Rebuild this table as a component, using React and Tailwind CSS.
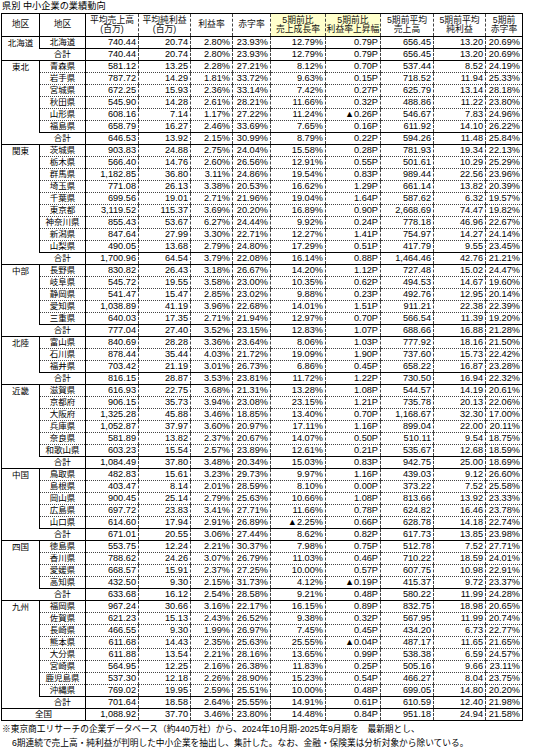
import React from "react";

const groups = [
  { name: "北海道", rows: [["北海道", "740.44", "20.74", "2.80%", "23.93%", "12.79%", "0.79P", "656.45", "13.20", "20.69%"]],
    total: ["740.44", "20.74", "2.80%", "23.93%", "12.79%", "0.79P", "656.45", "13.20", "20.69%"] },
  { name: "東北", rows: [
    ["青森県", "581.12", "13.25", "2.28%", "27.21%", "8.12%", "0.70P", "537.44", "8.52", "24.19%"],
    ["岩手県", "787.72", "14.29", "1.81%", "33.72%", "9.63%", "0.15P", "718.52", "11.94", "25.33%"],
    ["宮城県", "672.25", "15.93", "2.36%", "33.14%", "7.42%", "0.27P", "625.79", "13.14", "28.18%"],
    ["秋田県", "545.90", "14.28", "2.61%", "28.21%", "11.66%", "0.32P", "488.86", "11.22", "23.80%"],
    ["山形県", "608.16", "7.14", "1.17%", "27.22%", "11.24%", "▲0.26P", "546.67", "7.83", "24.96%"],
    ["福島県", "658.79", "16.27", "2.46%", "33.69%", "7.65%", "0.16P", "611.92", "14.10", "26.22%"]],
    total: ["646.53", "13.92", "2.15%", "30.99%", "8.79%", "0.22P", "594.26", "11.48", "25.84%"] },
  { name: "関東", rows: [
    ["茨城県", "903.83", "24.88", "2.75%", "24.04%", "15.58%", "0.28P", "781.93", "19.34", "22.13%"],
    ["栃木県", "566.40", "14.76", "2.60%", "26.56%", "12.91%", "0.55P", "501.61", "10.29", "25.29%"],
    ["群馬県", "1,182.85", "36.80", "3.11%", "24.86%", "19.54%", "0.83P", "989.44", "22.56", "23.96%"],
    ["埼玉県", "771.08", "26.13", "3.38%", "20.53%", "16.62%", "1.29P", "661.14", "13.82", "20.39%"],
    ["千葉県", "699.56", "19.01", "2.71%", "21.96%", "19.04%", "1.64P", "587.62", "6.32", "19.57%"],
    ["東京都", "3,119.52", "115.37", "3.69%", "20.20%", "16.89%", "0.90P", "2,668.69", "74.47", "19.82%"],
    ["神奈川県", "855.43", "53.67", "6.27%", "24.44%", "9.92%", "0.24P", "778.18", "46.96", "22.67%"],
    ["新潟県", "847.64", "27.99", "3.30%", "22.71%", "12.27%", "1.41P", "754.97", "14.27", "24.14%"],
    ["山梨県", "490.05", "13.68", "2.79%", "24.80%", "17.29%", "0.51P", "417.79", "9.55", "23.45%"]],
    total: ["1,700.96", "64.54", "3.79%", "22.08%", "16.14%", "0.88P", "1,464.46", "42.76", "21.21%"] },
  { name: "中部", rows: [
    ["長野県", "830.82", "26.43", "3.18%", "26.67%", "14.20%", "1.12P", "727.48", "15.02", "24.47%"],
    ["岐阜県", "545.72", "19.55", "3.58%", "23.00%", "10.35%", "0.62P", "494.53", "14.67", "19.60%"],
    ["静岡県", "541.47", "15.47", "2.85%", "23.02%", "9.88%", "0.23P", "492.76", "12.95", "20.14%"],
    ["愛知県", "1,038.89", "41.19", "3.96%", "22.68%", "14.01%", "1.51P", "911.21", "22.38", "22.39%"],
    ["三重県", "640.03", "17.35", "2.71%", "21.94%", "12.97%", "0.70P", "566.54", "11.39", "19.20%"]],
    total: ["777.04", "27.40", "3.52%", "23.15%", "12.83%", "1.07P", "688.66", "16.88", "21.28%"] },
  { name: "北陸", rows: [
    ["富山県", "840.69", "28.28", "3.36%", "23.64%", "8.06%", "1.03P", "777.92", "18.16", "21.50%"],
    ["石川県", "878.44", "35.44", "4.03%", "21.72%", "19.09%", "1.90P", "737.60", "15.73", "22.42%"],
    ["福井県", "703.42", "21.19", "3.01%", "26.73%", "6.86%", "0.45P", "658.22", "16.87", "23.28%"]],
    total: ["816.15", "28.87", "3.53%", "23.81%", "11.72%", "1.22P", "730.50", "16.94", "22.32%"] },
  { name: "近畿", rows: [
    ["滋賀県", "616.93", "22.75", "3.68%", "21.31%", "13.28%", "1.08P", "544.57", "14.19", "20.61%"],
    ["京都府", "906.15", "35.73", "3.94%", "23.08%", "23.15%", "1.21P", "735.78", "20.13", "22.06%"],
    ["大阪府", "1,325.28", "45.88", "3.46%", "18.85%", "13.40%", "0.70P", "1,168.67", "32.30", "17.00%"],
    ["兵庫県", "1,052.87", "37.97", "3.60%", "20.97%", "17.11%", "1.16P", "899.04", "22.00", "20.11%"],
    ["奈良県", "581.89", "13.82", "2.37%", "20.67%", "14.07%", "0.50P", "510.11", "9.54", "18.75%"],
    ["和歌山県", "603.23", "15.54", "2.57%", "23.89%", "12.61%", "0.21P", "535.67", "12.68", "18.59%"]],
    total: ["1,084.49", "37.80", "3.48%", "20.34%", "15.03%", "0.83P", "942.75", "25.00", "18.69%"] },
  { name: "中国", rows: [
    ["鳥取県", "482.83", "15.61", "3.23%", "29.73%", "9.97%", "1.16P", "439.03", "9.12", "26.60%"],
    ["島根県", "403.47", "8.14", "2.01%", "28.59%", "8.10%", "0.00P", "373.22", "7.52", "25.58%"],
    ["岡山県", "900.45", "25.14", "2.79%", "25.63%", "10.66%", "1.08P", "813.66", "13.92", "23.33%"],
    ["広島県", "697.72", "23.83", "3.41%", "27.71%", "11.66%", "0.78P", "624.82", "16.46", "23.78%"],
    ["山口県", "614.60", "17.94", "2.91%", "26.89%", "▲2.25%", "0.66P", "628.78", "14.18", "22.74%"]],
    total: ["671.01", "20.55", "3.06%", "27.44%", "8.62%", "0.82P", "617.73", "13.85", "23.98%"] },
  { name: "四国", rows: [
    ["徳島県", "553.75", "12.24", "2.21%", "30.37%", "7.98%", "0.75P", "512.78", "7.52", "27.71%"],
    ["香川県", "788.62", "24.26", "3.07%", "26.79%", "11.03%", "0.46P", "710.22", "18.59", "24.01%"],
    ["愛媛県", "668.57", "15.91", "2.37%", "27.25%", "10.00%", "0.57P", "607.75", "10.98", "22.91%"],
    ["高知県", "432.50", "9.30", "2.15%", "31.73%", "4.12%", "▲0.19P", "415.37", "9.72", "23.37%"]],
    total: ["633.68", "16.12", "2.54%", "28.58%", "9.21%", "0.48P", "580.22", "11.99", "24.28%"] },
  { name: "九州", rows: [
    ["福岡県", "967.24", "30.66", "3.16%", "22.17%", "16.15%", "0.89P", "832.75", "18.98", "20.65%"],
    ["佐賀県", "621.23", "15.13", "2.43%", "26.52%", "9.38%", "0.32P", "567.95", "11.99", "20.74%"],
    ["長崎県", "466.55", "9.30", "1.99%", "26.97%", "7.45%", "0.45P", "434.20", "6.73", "22.77%"],
    ["熊本県", "611.68", "14.43", "2.35%", "25.63%", "25.55%", "▲0.04P", "487.17", "11.65", "21.65%"],
    ["大分県", "611.88", "13.54", "2.21%", "28.16%", "13.65%", "0.99P", "538.38", "6.59", "24.57%"],
    ["宮崎県", "564.95", "12.25", "2.16%", "26.38%", "11.83%", "0.25P", "505.16", "9.66", "23.11%"],
    ["鹿児島県", "537.30", "12.18", "2.26%", "28.90%", "15.23%", "0.54P", "466.27", "8.04", "23.75%"],
    ["沖縄県", "769.02", "19.95", "2.59%", "25.51%", "10.00%", "0.48P", "699.05", "14.80", "20.20%"]],
    total: ["701.64", "18.58", "2.64%", "25.55%", "14.91%", "0.61P", "610.59", "12.40", "21.98%"] },
];

const national = ["1,088.92", "37.70", "3.46%", "23.80%", "14.48%", "0.84P", "951.18", "24.94", "21.58%"];

const widths = [38, 46, 53, 52, 42, 38, 55, 55, 53, 52, 37];

function NumCells({ vals, solidTop, bottom }) {
  return vals.map((v, i) => {
    const first = i === 0;
    const last = i === vals.length - 1;
    return (
      <td
        key={i}
        className={[
          "p-0 pr-[2px] text-right whitespace-nowrap align-middle",
          first ? "[border-left:1px_solid_#000]" : "[border-left:1px_dashed_#444]",
          solidTop ? "[border-top:1px_solid_#000]" : "[border-top:1px_dotted_#444]",
          last ? "[border-right:1px_solid_#000]" : "",
          bottom ? "[border-bottom:1px_solid_#000]" : "",
        ].join(" ")}
      >
        {v}
      </td>
    );
  });
}

function Head({ l1, l2, yellow, solidLeft, last }) {
  return (
    <th
      className={[
        "p-0 font-normal text-center align-middle leading-[9.5px] text-[8.8px] text-[#111]",
        "[border-top:1px_solid_#000] [border-bottom:1px_solid_#000]",
        solidLeft ? "[border-left:1px_solid_#000]" : "[border-left:1px_dashed_#444]",
        last ? "[border-right:1px_solid_#000]" : "",
        yellow ? "bg-[#ffffcc]" : "bg-white",
      ].join(" ")}
    >
      <div>{l1}</div>
      {l2 ? <div>{l2}</div> : null}
    </th>
  );
}

export default function App() {
  const body = [];
  groups.forEach((g, gi) => {
    g.rows.forEach((r, ri) => {
      body.push(
        <tr key={`${gi}-${ri}`} className="h-[12px]">
          {ri === 0 ? (
            <td
              rowSpan={g.rows.length + 1}
              className="p-0 pt-[1px] text-center align-top text-[8.5px] leading-[10px] [border-left:1px_solid_#000] [border-top:1px_solid_#000]"
            >
              {g.name}
            </td>
          ) : null}
          <td
            className={[
              "p-0 text-center whitespace-nowrap text-[8.5px] [border-left:1px_solid_#000] [border-right:1px_solid_#000]",
              ri === 0 ? "[border-top:1px_solid_#000]" : "[border-top:1px_dotted_#444]",
            ].join(" ")}
          >
            {r[0]}
          </td>
          <NumCells vals={r.slice(1)} solidTop={ri === 0} />
        </tr>
      );
    });
    body.push(
      <tr key={`${gi}-t`} className="h-[12px]">
        <td className="p-0 text-center text-[8.5px] [border-top:1px_solid_#000] [border-right:1px_solid_#000]">合計</td>
        <NumCells vals={g.total} solidTop />
      </tr>
    );
  });

  return (
    <div className="w-[540px] h-[750px] bg-white text-black font-['Liberation_Sans','Noto_Sans_CJK_JP',sans-serif] overflow-hidden">
      <div className="h-[13px] pl-[2px] text-[9.2px] leading-[13px]">県別 中小企業の業績動向</div>
      <table className="ml-[1px] w-[521px] table-fixed border-collapse text-[9.2px] leading-none">
        <colgroup>
          {widths.map((w, i) => (
            <col key={i} style={{ width: `${w}px` }} />
          ))}
        </colgroup>
        <thead>
          <tr className="h-[23px]">
            <Head l1="地区" solidLeft />
            <Head l1="地区" solidLeft />
            <Head l1="平均売上高" l2="(百万)" solidLeft />
            <Head l1="平均純利益" l2="(百万)" />
            <Head l1="利益率" />
            <Head l1="赤字率" />
            <Head l1="5期前比" l2="売上成長率" yellow />
            <Head l1="5期前比" l2="利益率上昇幅" yellow />
            <Head l1="5期前平均" l2="売上高" />
            <Head l1="5期前平均" l2="純利益" />
            <Head l1="5期前" l2="赤字率" last />
          </tr>
        </thead>
        <tbody>
          {body}
          <tr className="h-[12px]">
            <td
              colSpan={2}
              className="p-0 text-center text-[8.5px] [border-left:1px_solid_#000] [border-top:1px_solid_#000] [border-bottom:1px_solid_#000] [border-right:1px_solid_#000]"
            >
              全国
            </td>
            <NumCells vals={national} solidTop bottom />
          </tr>
        </tbody>
      </table>
      <div className="pt-[1px] text-[8.7px] leading-[14px] whitespace-nowrap">
        <div className="pl-[2px]">※東京商工リサーチの企業データベース（約440万社）から、2024年10月期-2025年9月期を　最新期とし、</div>
        <div className="pl-[12px]">6期連続で売上高・純利益が判明した中小企業を抽出し、集計した。なお、金融・保険業は分析対象から除いている。</div>
      </div>
    </div>
  );
}
